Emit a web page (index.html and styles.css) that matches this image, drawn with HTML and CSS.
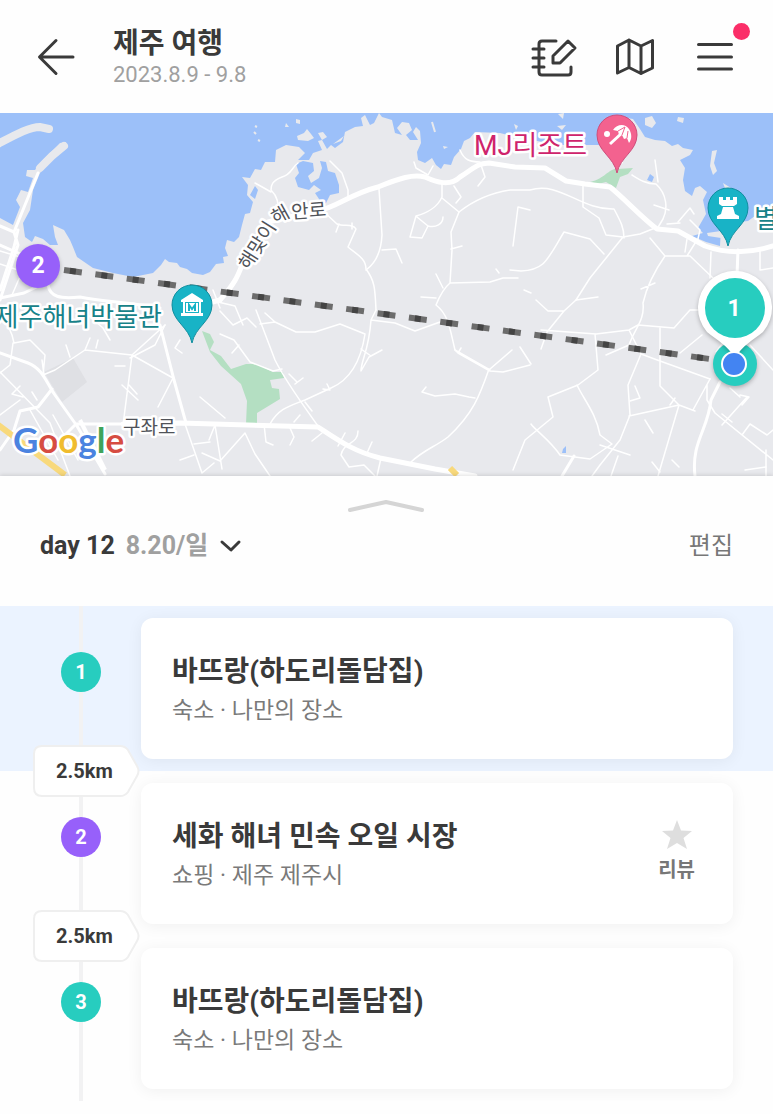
FILE: index.html
```html
<!DOCTYPE html>
<html lang="ko">
<head>
    <meta charset="UTF-8">
    <meta name="viewport" content="width=device-width, initial-scale=1.0">
    <title>제주 여행</title>
    <link rel="stylesheet" href="styles.css">
</head>
<body>
    <header class="header">
        <a href="#" class="icon-btn" aria-label="뒤로">
            <svg width="40" height="40" viewBox="0 0 40 40"><path d="M37 20H4M20 3.500L3.500 20L20 36.500"/></svg>
        </a>
        <div class="trip">
            <h1>제주 여행</h1>
            <p>2023.8.9 - 9.8</p>
        </div>
        <nav class="actions">
            <button type="button" class="icon-btn" aria-label="메모">
                <svg width="44" height="40" viewBox="0 0 44 40"><path d="M25 4H11Q8 4 8 7V35Q8 38 11 38H37Q40 38 40 35V30M2 12H13M2 21H13M2 30H13M37 4L44 11L29 26H22V19Z"/></svg>
            </button>
            <button type="button" class="icon-btn" aria-label="지도">
                <svg width="40" height="40" viewBox="0 0 40 40"><path d="M2.500 9L14 3L26 9L37.500 3.500V31L26 36.500L14 30.500L2.500 36ZM14 3V30.500M26 9V36.500"/></svg>
            </button>
            <button type="button" class="icon-btn menu-btn" aria-label="메뉴">
                <svg width="40" height="40" viewBox="0 0 40 40"><path d="M3.500 7.500H36.500M3.500 20H36.500M3.500 32H36.500"/></svg>
                <span class="dot"></span>
            </button>
        </nav>
    </header>

    <main>
        <svg class="map" viewBox="0 113 773 363" role="img" aria-label="여행 지도">
            <defs>
                <path id="pin" d="M0 38C-3 22-20 16-20 0A20 20 0 0 1 20 0C20 16 3 22 0 38Z"/>
                <path id="coast-road" d="M249 271L276 228Q281 220 288 219L340 215"/>
            </defs>

            <rect class="land" y="113" width="773" height="363"/>

            <!-- 바다 -->
            <path class="sea" d="M0 113H773V216L755 216L748 221L740 222L721 228L720 246L706 242L692 236L703 233L698 228L706 214L703 200L707 192L700 186L695 188L692 196L685 191L683 180L685 168L680 160L690 155L693 150L683 148L678 144L672 146L665 141L655 140L645 137L640 129L633 119L620 117L600 145L560 145L520 138L500 133L475 132L470 138L464 141L461 149L454 157L451 165L444 164L441 169L436 165L432 158L425 163L418 160L417 152L421 143L420 131L416 127L413 132L418 140L410 140L406 135L412 130L409 123L402 122L397 128L402 135L395 133L392 120L382 117L379 113L374 123L370 125L365 115L361 118L363 126L355 127L345 132L343 142L335 148L331 145L327 149L322 140L318 141L322 150L313 153L309 160L298 160L305 153L299 147L286 145L276 150L275 162L265 162L261 170L255 169L250 178L242 177L248 185L247 195L253 202L250 213L245 214L242 225L239 237L234 242L227 240L225 248L228 256L223 257L224 263L216 264L210 272L203 275L192 273L187 269L180 267L177 263L169 262L165 259L161 265L153 273L133 277L113 273L93 268L77 257L73 247L70 240L64 230L53 225L55 237L58 245L50 245L43 239L35 236L32 242L25 237L23 223L30 210L33 190L40 173L53 157L67 147L66 142L60 143L43 160L35 170L27 170L26 176L33 178L28 192L21 190L16 200L20 207L13 225L0 218Z"/>
            <path class="sea" d="M296 164L303 161L313 163L314 171L308 176L311 183L319 178L322 168L320 161L326 162L328 171L335 173L339 185L339 193L330 195L326 203L316 206L319 199L315 193L321 190L314 185L309 190L298 187L295 178L299 173ZM255 186L258 190L255 199L250 195ZM650 174L654 177L652 182L647 180Z"/>

            <!-- 섬과 방파제 -->
            <path class="land" d="M297 136L304 133L307 129L311 134L314 138L308 141L298 140ZM318 133L323 132L327 137L322 140ZM296 119L300 120V124L296 123ZM286 123L289 127L285 127ZM645 118L652 116L656 123L652 128L645 125ZM678 117L684 118L683 123L677 121ZM712 151L717 150L714 163L717 171L713 175L710 166ZM723 183L731 188L726 191ZM557 126L566 125L562 130ZM558 114L564 113L563 119ZM443 146L448 147L444 149ZM333 144L344 136L341 141ZM514 124L518 126L516 130ZM707 233L721 231V238L708 236Z"/>
            <path class="pier" d="M-4 145C15 135 29 127 40 127L49 129M64 146L52 156L40 168"/>
            <path class="fleck" d="M432 122L435 132M254 132L256 134M258 140L260 141M255 126L257 127"/>

            <!-- 녹지 -->
            <path class="park" d="M590 182C606 178 609 168 617 169L633 168L628 174L620 177L616 188L606 182L598 184ZM202 331L210 334L214 342L210 350L221 356L231 369L246 364L256 364L273 372L283 372L284 378L270 380L272 388L279 389L280 399L257 413V424H246L247 401L241 384L221 366L210 352Z"/>
            <path class="block" d="M44 372L73 358L87 382L62 402Z"/>
            <path class="sea" d="M563 449L566 446V453H562Z"/>

            <!-- 도로 -->
            <g class="roads thin">
                <path d="M298 163C291 168 292 174 282 177C272 181 271 185 271 190C278 197 278 203 278 210M255 183L264 188L271 192M330 161L342 173L348 190V200M323 211L337 224C344 227 353 223 356 229L348 247C358 255 366 259 366 269C375 281 375 289 376 310"/>
                <path d="M379 189L382 235C381 255 373 265 366 270M382 250L396 249L402 263M339 224L336 232M352 223V229M414 162L416 168L428 175L433 166M442 184L442 197C438 206 428 213 416 216L410 237L422 238L428 226L417 217M428 226C436 228 443 224 443 217M442 198L459 212C473 201 490 193 510 190H530C560 181 580 210 614 209C621 222 624 228 624 238M454 186L461 197L456 203"/>
                <path d="M459 212L451 232L452 250L450 283C444 288 440 295 436 305C449 315 450 330 455 350L490 370L489 369C480 395 473 414 448 437C435 447 425 449 411 462M451 249L462 246M450 283L490 282L503 278H518M436 274L443 288M421 297L436 298M481 165L485 177L478 186M460 150C464 160 470 162 480 162M499 273L496 269"/>
                <path d="M256 310L275 360C286 382 303 405 318 426M260 324L275 322L296 332H315L340 324L365 334C360 367 345 382 331 388L305 400C290 406 279 408 270 424M376 310L371 320C369 350 361 361 361 371L369 357L382 350M371 320L395 323L415 331L440 322M265 313L275 322M361 349L371 356M455 350L458 353L490 371L503 372L530 365M458 353L461 348M490 369L512 350"/>
                <path d="M422 392L435 396L455 394L469 397L475 398M422 392L426 387M289 374L297 382M295 384L303 378M294 422L300 415M312 411L305 402M323 389L330 390L327 384M264 424L266 442L273 445M290 428L294 437L290 445M312 441L322 433M338 446L345 433M358 431C358 445 344 441 341 455L349 467L364 465L375 476M367 453L372 442M381 458L377 476"/>
                <path d="M583 186V207L599 218L606 235L623 237L640 234L655 228M623 237L590 278L576 300M564 232L590 239L604 254M513 246L518 207L530 210M564 232C547 260 545 270 521 271L510 270M632 175C640 180 646 184 656 184C667 194 668 209 663 219L657 229M654 205L669 210M650 238L665 256C653 273 646 290 643 303C645 320 635 328 629 345L606 355M655 283L641 289M665 256L690 256L713 278M687 256L697 240M687 239L685 252M678 222L690 208L694 214"/>
                <path d="M576 300L564 311L547 332L541 349M576 300L598 297M536 300L548 311L564 311M541 330L596 334L629 330L638 325L674 328L690 310H700M595 334L598 370L578 385L548 397L553 417L525 440L513 470M577 385C584 400 596 413 600 435L612 444L590 459L560 455C550 440 535 430 531 424M629 330L641 354L628 385L630 415L620 440L600 465L592 476M641 354L660 361L710 379M660 328L660 386L679 405L658 476M629 416L679 405L695 411"/>
                <path d="M710 379L693 410M707 385L707 400L715 413L773 460M747 397L722 425M740 395L749 397L742 405M730 388L740 397M722 414L732 422M742 435L750 424L767 435L773 430M766 450V476M670 405L675 398M635 386L640 398L630 401M652 462L660 472M672 460L679 467M600 445L630 455M618 456L611 476M531 364L520 347"/>
                <path d="M0 307L12 335L14 343L30 340L45 355L43 375L55 370L85 350L132 355L165 325M132 355L123 425M132 355L173 378L158 407M85 350L90 338M66 345L70 357M96 348L98 340M129 385L137 394M122 385L138 400M115 366H125M0 372L50 423L70 476M13 343L10 365L0 373M20 386L12 394L23 397M32 392L37 400M30 410L58 460M0 415L20 400M44 375L42 360M37 309L30 330M53 415L78 460"/>
                <path d="M165 325L155 345L130 358M0 251L20 257M0 264L18 270M12 295L25 265M80 308L103 328L110 340M185 424L202 473L214 463M194 444L210 442M209 440L215 425L222 469M202 453L220 461L245 433L255 454L270 476M194 455L180 460M220 311L233 325L247 318L256 327M220 334L234 340L250 362L273 371L282 369M218 302L235 306L243 325M232 353L239 345M213 290L220 308M182 353L175 348L180 340M200 397L225 418"/>
                <path d="M702 335L680 353M745 470L766 467M716 352L725 340M750 345L773 370M760 248V270L773 268M711 252L710 278M690 220L700 230L697 243M680 223L667 224M524 290L531 293M620 148L622 163M655 160L658 182M645 420L653 433"/>
            </g>
            <g class="roads mid">
                <path d="M0 226L14 232L18 245L0 300M14 232L38 173M0 245L25 256M18 230L14 247L0 290M0 298L24 293L45 283M48 285C50 297 60 299 80 297C105 302 130 302 160 308"/>
                <path d="M160 325L174 380L186 423M0 353L28 363C43 369 46 382 55 395L77 426M52 389L38 407L20 411L14 430L0 450M77 426L105 474M60 440L76 424L123 424"/>
                <path d="M738 250L737 275M720 382L711 400C708 430 691 442 695 476M574 456L562 476"/>
            </g>
            <g class="roads main">
                <path d="M220 300C237 281 238 275 244 260L268 222L320 210C335 208 350 194 378 187C400 178 413 174 425 177C436 182 450 187 460 177C475 168 475 164 489 163L515 167L545 168L566 181L585 184L610 187C625 199 642 218 657 229L678 231L705 246C727 254 748 254 773 246"/>
                <path d="M123 424L180 423L318 427C335 438 352 451 380 458L435 469L475 476M190 308L220 300"/>
            </g>
            <path class="highway" d="M-3 424L65 475M450 468L457 475"/>
            <path class="pier-road" d="M80 420L105 470"/>

            <!-- 지도 지명 -->
            <text class="road-label"><textPath href="#coast-road">해맞이해안로</textPath></text>
            <text class="road-label" x="123" y="434">구좌로</text>
            <text class="place teal" x="162" y="326" text-anchor="end">제주해녀박물관</text>
            <text class="place teal" x="754" y="228">별</text>
            <text class="place pink" x="474" y="155">MJ리조트</text>
            <text class="google" x="13" y="453"><tspan class="g-blue">G</tspan><tspan class="g-red">o</tspan><tspan class="g-yellow">o</tspan><tspan class="g-blue">g</tspan><tspan class="g-green">l</tspan><tspan class="g-red">e</tspan></text>

            <!-- 이동 경로 -->
            <path class="route" d="M64 270L710 359"/>
            <path class="route-core" d="M64 270L710 359"/>

            <!-- 장소 핀 -->
            <g transform="translate(617 135)">
                <use href="#pin" class="pin-pink"/>
                <circle class="glyph" cx="-10" cy="-1" r="3"/>
                <path class="glyph" d="M-4 -5C0 -11 8 -12 12 -6C15 -1 15 4 12 8L10 3L7 4L5 0L2 0L1 -4Z"/>
                <path class="glyph-line" d="M6 -3L-7 9"/>
                <path class="rib-pink" d="M1 -4L8 -8L5 0M10 3L11 -4"/>
            </g>
            <g transform="translate(728 208)">
                <use href="#pin" class="pin-teal"/>
                <path class="glyph" d="M-9 -11H-5V-8H-2V-11H2V-8H5V-11H9V-4L6 -2H-6L-9 -4ZM-5 -1H5L7 6L11 8V11H-11V8L-7 6Z"/>
            </g>
            <g transform="translate(192 305)">
                <use href="#pin" class="pin-teal"/>
                <path class="glyph" d="M0 -12L11 -5V-3H-11V-5ZM-9 -3H-7V8H-9ZM7 -3H9V8H7ZM-11 8H11V11H-11ZM-6 -2H6V7H-6Z"/>
                <path class="museum" d="M-3 6V0L0 4L3 0V6"/>
            </g>

            <!-- 일정 마커 -->
            <circle class="shadow purple-fill" cx="38" cy="266" r="22"/>
            <text class="marker-num" x="38" y="273">2</text>
            <circle class="shadow teal-fill" cx="735" cy="364" r="22"/>
            <path class="shadow selected" d="M735 358C728 346 717 340 707 332A37 37 0 1 1 763 332C753 340 742 346 735 358Z"/>
            <circle class="teal-fill" cx="735" cy="308" r="30"/>
            <text class="marker-num" x="734" y="316">1</text>
            <circle class="here" cx="734" cy="364" r="12"/>
        </svg>

        <section class="sheet">
            <button type="button" class="handle" aria-label="목록 펼치기">
                <svg width="80" height="16" viewBox="0 0 80 16"><path d="M3 12L39 4L75 12"/></svg>
            </button>
            <div class="day-bar">
                <button type="button" class="day-select">
                    <span>day 12</span>
                    <span class="date">8.20/일</span>
                    <svg width="22" height="16" viewBox="0 0 22 16"><path d="M3 4L12 12L20 4"/></svg>
                </button>
                <button type="button" class="edit">편집</button>
            </div>

            <ol class="timeline">
                <li class="stop active">
                    <span class="num">1</span>
                    <article class="card">
                        <div>
                            <h2>바뜨랑(하도리돌담집)</h2>
                            <p>숙소 · 나만의 장소</p>
                        </div>
                    </article>
                    <div class="distance">
                        <svg viewBox="0 0 108 52"><path d="M10 1H88Q93 1 96 5L105 21Q108 26 105 31L96 47Q93 51 88 51H10Q2 51 2 43V9Q2 1 10 1Z"/></svg>
                        <span>2.5km</span>
                    </div>
                </li>
                <li class="stop">
                    <span class="num purple">2</span>
                    <article class="card">
                        <div>
                            <h2>세화 해녀 민속 오일 시장</h2>
                            <p>쇼핑 · 제주 제주시</p>
                        </div>
                        <button type="button" class="review">
                            <svg width="34" height="34" viewBox="0 0 34 34"><path d="M17 2L21 12.500L32 13L23.500 20L27 31L17 25L7 31L10.500 20L2 13L13 12.500Z"/></svg>
                            리뷰
                        </button>
                    </article>
                    <div class="distance">
                        <svg viewBox="0 0 108 52"><path d="M10 1H88Q93 1 96 5L105 21Q108 26 105 31L96 47Q93 51 88 51H10Q2 51 2 43V9Q2 1 10 1Z"/></svg>
                        <span>2.5km</span>
                    </div>
                </li>
                <li class="stop">
                    <span class="num">3</span>
                    <article class="card">
                        <div>
                            <h2>바뜨랑(하도리돌담집)</h2>
                            <p>숙소 · 나만의 장소</p>
                        </div>
                    </article>
                </li>
            </ol>
        </section>
    </main>
</body>
</html>
```
FILE: styles.css
```css
* {
    box-sizing: border-box;
}

body {
    margin: 0;
    background: #fefefe;
    color: #3a3a3a;
    font-family: Roboto, "Noto Sans CJK KR", sans-serif;
}

h1, h2, p, ol {
    margin: 0;
    padding: 0;
}

button {
    border: 0;
    padding: 0;
    background: none;
    color: inherit;
    font: inherit;
    cursor: pointer;
}

svg {
    display: block;
}

/* header */
.header {
    display: flex;
    align-items: center;
    height: 113px;
    padding: 0 38px 0 36px;
}

.icon-btn svg,
.day-select svg {
    overflow: visible;
    fill: none;
    stroke: #3a3a3a;
    stroke-width: 3;
    stroke-linecap: round;
    stroke-linejoin: round;
}

.trip {
    margin-left: 37px;
    padding-top: 3px;
}

.trip h1 {
    font-size: 28px;
    line-height: 34px;
}

.trip p {
    color: #a0a0a0;
    font-size: 22px;
    line-height: 28px;
}

.actions {
    display: flex;
    gap: 40px;
    margin-left: auto;
}

.menu-btn {
    position: relative;
}

.dot {
    position: absolute;
    top: -14px;
    right: -15px;
    width: 17px;
    height: 17px;
    border-radius: 50%;
    background: #fb2e68;
}

/* map */
.map {
    width: 100%;
    height: auto;
}

.land { fill: #e8e9ed; }
.sea { fill: #9cc0f9; }
.park { fill: #b4dfc2; }
.block { fill: #dfe0e4; }

.pier,
.fleck,
.roads,
.highway,
.pier-road,
.route,
.route-core {
    fill: none;
}

.pier {
    stroke: #e8e9ed;
    stroke-width: 8;
    stroke-linecap: round;
}

.fleck {
    stroke: #e8e9ed;
    stroke-width: 2;
}

.roads {
    stroke: #fff;
    stroke-linejoin: round;
    stroke-linecap: round;
}

.thin { stroke-width: 1.5; }
.mid { stroke-width: 3; }
.main { stroke-width: 5; }

.highway {
    stroke: #f8d97c;
    stroke-width: 6;
}

.pier-road {
    stroke: #fff;
    stroke-width: 4;
}

.route {
    stroke: #6c6c6c;
    stroke-width: 6;
    stroke-dasharray: 18 13.65;
}

.route-core {
    stroke: #444;
    stroke-width: 6;
    stroke-dasharray: 6 25.65;
    stroke-dashoffset: -6;
}

.map text {
    paint-order: stroke;
    stroke: #fff;
    stroke-width: 5px;
    stroke-linejoin: round;
}

.map .road-label {
    fill: #505359;
    font-size: 19px;
}

.place {
    font-size: 26px;
}

.place.teal { fill: #178289; }

.place.pink {
    fill: #cf246c;
    font-size: 27px;
}

.google {
    font-family: Lato, sans-serif;
    font-size: 35px;
    font-weight: 700;
}

.g-blue { fill: #4b83e0; }
.g-red { fill: #d64c42; }
.g-yellow { fill: #f0bc2e; }
.g-green { fill: #3fa35a; }

.pin-pink {
    fill: #f3628f;
    stroke: #cf4d7b;
}

.pin-teal {
    fill: #18b3c6;
    stroke: #118e9f;
}

.glyph { fill: #fff; }

.glyph-line {
    stroke: #fff;
    stroke-width: 3;
}

.rib-pink {
    fill: none;
    stroke: #f3628f;
    stroke-width: 1;
}

.museum {
    fill: none;
    stroke: #18b3c6;
    stroke-width: 2;
}

.shadow { filter: drop-shadow(0 2px 2px rgba(0, 0, 0, 0.25)); }
.purple-fill { fill: #9760fa; }
.teal-fill { fill: #27cdbf; }
.selected { fill: #fff; }

.here {
    fill: #4384f2;
    stroke: #fff;
    stroke-width: 2;
}

.map .marker-num {
    fill: #fff;
    stroke: none;
    font-size: 23px;
    font-weight: 700;
    text-anchor: middle;
}

/* sheet */
.sheet {
    position: relative;
    background: #fefefe;
    box-shadow: 0 -1px 4px rgba(0, 0, 0, 0.12);
}

.handle {
    display: block;
    margin: 0 auto;
    padding-top: 22px;
}

.handle svg {
    fill: none;
    stroke: #d5d5d5;
    stroke-width: 4;
    stroke-linecap: round;
    stroke-linejoin: round;
}

.day-bar {
    display: flex;
    justify-content: space-between;
    align-items: center;
    padding: 15px 40px 43px;
    line-height: 34px;
}

.day-select {
    display: flex;
    align-items: center;
    gap: 11px;
    font-size: 25px;
    font-weight: 700;
}

.date {
    color: #a0a0a0;
}

.edit {
    color: #777;
    font-size: 24px;
}

/* timeline */
.timeline {
    list-style: none;
}

.stop {
    display: flex;
    position: relative;
    padding: 12px 40px 12px 61px;
    background: linear-gradient(#f2f2f3, #f2f2f3) 79px 0 / 4px 100% no-repeat;
}

.stop.active {
    background-color: #ebf3ff;
}

.num {
    flex: none;
    width: 40px;
    height: 40px;
    margin: 34px 40px 0 0;
    border-radius: 50%;
    background: #27cdbf;
    color: #fff;
    font-size: 20px;
    font-weight: 700;
    line-height: 40px;
    text-align: center;
}

.num.purple {
    background: #9760fa;
}

.card {
    display: flex;
    flex: 1;
    justify-content: space-between;
    align-items: center;
    padding: 35px 38px 31px 31px;
    border-radius: 12px;
    background: #fff;
    box-shadow: 0 2px 16px rgba(0, 0, 0, 0.06);
}

.card h2 {
    font-size: 28px;
    line-height: 38px;
}

.card p {
    margin-top: 3px;
    color: #7a7a7a;
    font-size: 23px;
    line-height: 34px;
}

.review {
    padding-bottom: 5px;
    color: #777;
    font-size: 20px;
    font-weight: 700;
    line-height: 36px;
}

.review svg {
    margin: 0 auto;
    fill: #dedede;
}

/* distance tag sits over the border between two stops */
.distance {
    position: absolute;
    z-index: 1;
    bottom: -26px;
    left: 32px;
    width: 108px;
    font-size: 20px;
    font-weight: 700;
    line-height: 52px;
}

.distance svg {
    position: absolute;
    inset: 0;
    fill: #fff;
    stroke: #efefef;
    stroke-width: 2;
}

.distance span {
    position: relative;
    padding-left: 24px;
}
```
